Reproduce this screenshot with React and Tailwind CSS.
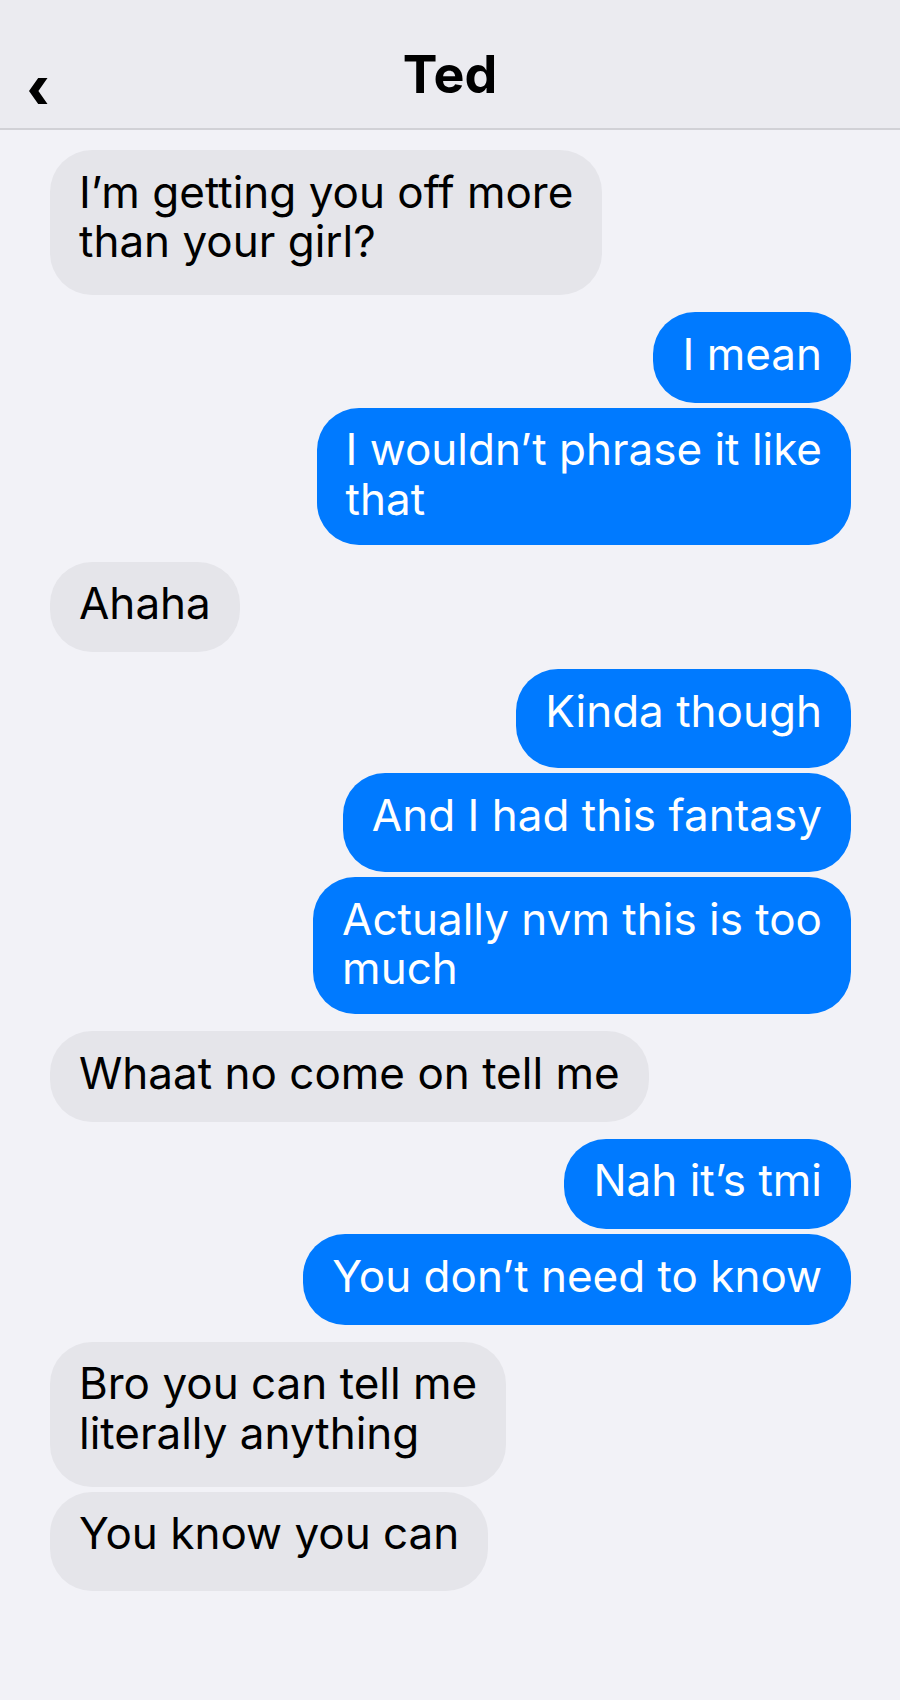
import React from "react";

const messages = [
  { me: false, text: "I’m getting you off more\nthan your girl?", pb: "pb-[28.5px]" },
  { me: true, text: "I mean", pb: "pb-[23.5px]" },
  { me: true, text: "I wouldn’t phrase it like\nthat", pb: "pb-[20.5px]" },
  { me: false, text: "Ahaha", pb: "pb-[23.5px]" },
  { me: true, text: "Kinda though", pb: "pb-[32px]" },
  { me: true, text: "And I had this fantasy", pb: "pb-[32px]" },
  { me: true, text: "Actually nvm this is too\nmuch", pb: "pb-[20.5px]" },
  { me: false, text: "Whaat no come on tell me", pb: "pb-[23.5px]" },
  { me: true, text: "Nah it’s tmi", pb: "pb-[23.5px]" },
  { me: true, text: "You don’t need to know", pb: "pb-[23.5px]" },
  { me: false, text: "Bro you can tell me\nliterally anything", pb: "pb-[28.5px]" },
  { me: false, text: "You know you can", pb: "pb-[32px]" },
];

function Chevron() {
  return (
    <svg width="19" height="26" viewBox="0 0 19 26" className="block">
      <polygon points="9.2,0 18.5,0 9.4,13 18.5,26 9.2,26 0,13" fill="#000" />
    </svg>
  );
}

export default function App() {
  return (
    <div
      className="min-h-screen w-full bg-[#F2F2F7]"
      style={{ fontFamily: "Inter, 'Noto Sans', sans-serif" }}
    >
      <header className="grid h-[130px] grid-cols-[1fr_auto_1fr] border-b-2 border-[#D1D1D6] bg-[#EBEBF0]">
        <div className="pl-[29px] pt-[78px]">
          <Chevron />
        </div>
        <div className="pt-[49px] text-[52px] font-bold leading-[52px] text-black">Ted</div>
        <div />
      </header>
      <main className="flex flex-col pl-[50px] pr-[49px] pt-[20px]">
        {messages.map((m, i) => {
          const prev = messages[i - 1];
          const gap = i === 0 ? "" : prev.me === m.me ? "mt-[5px]" : "mt-[17px]";
          return (
            <div
              key={i}
              className={`${gap} w-fit whitespace-pre-line rounded-[42px] px-[29px] pt-[17.5px] ${m.pb} text-[44px] leading-[49.5px] ${
                m.me
                  ? "self-end bg-[#007AFF] text-white"
                  : "self-start bg-[#E5E5EA] text-black"
              }`}
            >
              {m.text}
            </div>
          );
        })}
      </main>
    </div>
  );
}
